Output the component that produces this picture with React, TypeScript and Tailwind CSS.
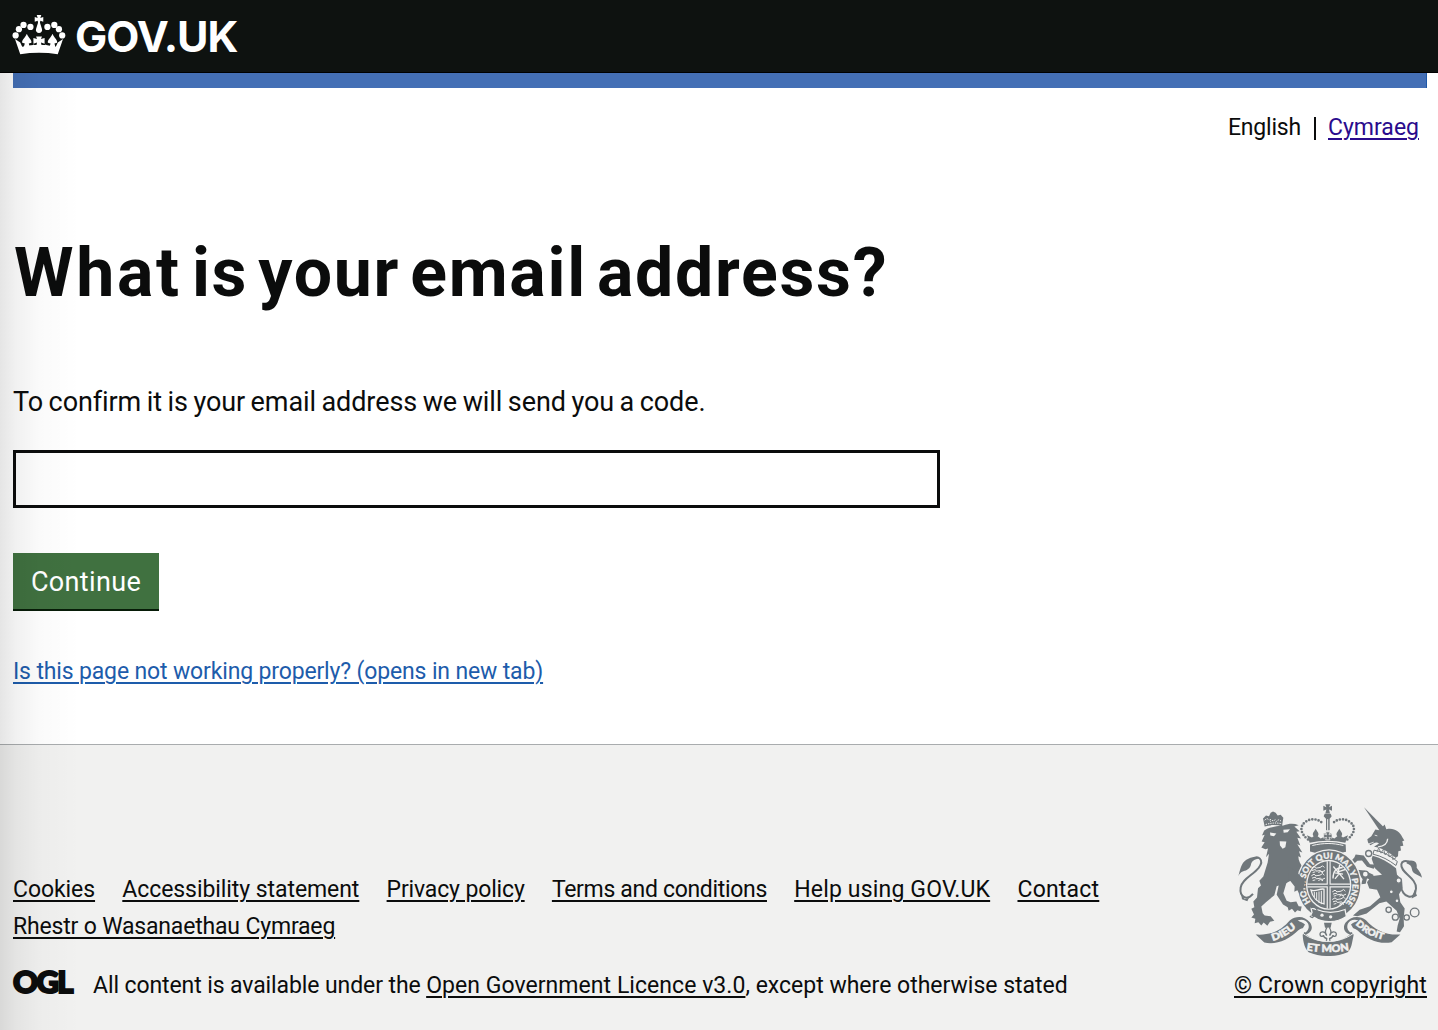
const PEARLS = [
  [47, 107],
  [57, 88],
  [71, 75],
  [92, 81],
];

function CrownLogo() {
  return (
    <svg viewBox="36 42 164 124" className="h-[41px] w-[54px]" fill="#fff" aria-hidden="true">
      {PEARLS.map(([x, y]) => (
        <g key={x}>
          <circle cx={x} cy={y} r="9.500" />
          <circle cx={235.5 - x} cy={y} r="9.500" />
        </g>
      ))}
      <path d="M111 45h14l-3 9 9-3v14l-9-3-1 6 6 19a9.500 9.500 0 1 1-18 0l6-19-1-6-9 3V51l9 3z" />
      <path d="M45 118l16 10 6 13q51-12 102 0l6-13 16-10-16 46q-57-9-114 0z" />
      <path d="M70 147l5-16-8-2c-2-8 9-14 14-27 5 13 16 19 14 27l-8 2 2 8q9 2 12-5l9 5h20l9-5q3 7 12 5l2-8-8-2c-2-8 9-14 14-27 5 13 16 19 14 27l-8 2 4 16z" />
      <path d="M109 110h18l-3 8 11-3v17l-11-4 3 16h-18l3-16-11 4v-17l11 3z" />
    </svg>
  );
}

const LOOPS = [
  [431, 175, 9],
  [421, 237, 9],
  [521, 256, 8],
  [499, 290, 6],
  [516, 317, 6],
  [491, 344, 8],
  [511, 366, 9],
  [545, 367, 8],
  [569, 352, 13],
];

function Quarter({ x, y }: { x: number; y: number }) {
  return (
    <g transform={`translate(${x} ${y})`} stroke="#f1f1f0" strokeWidth="3" fill="none">
      <path d="M2 8l8-5 6 5 12-2 8-5 5 5M4 15l10-3 3 5 12-2 5 4 9-4M6 21l8-2m9 2l7-3 7 4" />
      <path d="M2 31l8-5 6 5 12-2 8-5 5 5M4 38l10-3 3 5 12-2 5 4 9-4M6 45l8-2m9 2l7-3 7 4" />
    </g>
  );
}

function RoyalArms() {
  return (
    <svg viewBox="36 24 558 458" className="h-[153px] w-[186px]" fill="#70777b" aria-hidden="true">
      {/* central crown */}
      <path d="M301 27h15l-4 9 9-4v15l-9-4 3 12h-14l3-12-9 4V32l9 4z" />
      <path d="M299 56h18l3 7-6 8v34h-11V71l-7-8z" />
      <path d="M308 72v34" stroke="#f1f1f0" strokeWidth="3" />
      <g fill="none" stroke="#70777b" strokeWidth="8" strokeLinecap="round" strokeDasharray="0 9.500">
        <path d="M249 133c-24-19-26-40-7-53 14-12 42-10 53 8" />
        <path d="M367 133c24-19 26-40 7-53-14-12-42-10-53 8" />
      </g>
      <path d="M254 143l-8-23 15 7 5-4c-7-8 2-13 6-22 4 9 13 14 6 22l9 7 13-6-4-9h23l-4 9 13 6 9-7c-7-8 2-13 6-22 4 9 13 14 6 22l5 4 15-7-8 23c-34-8-73-8-107 0z" />
      <path d="M302 110h13l-3 9 9-3v13l-9-3 3 8h-13l3-8-9 3v-13l9 3z" stroke="#f1f1f0" strokeWidth="2" />
      <path d="M255 148c35-10 71-10 107 0l1 22-24 5c-20-6-40-6-60 0l-24-6z" />
      <path d="M262 151c33-8 62-8 93 0" fill="none" stroke="#f1f1f0" strokeWidth="3" />

      {/* lion */}
      <path d="M119 94l-5-24 9-9 9 2 5-10 7-4 8 4 6 8 9-2 8 9-4 25c-18-5-34-4-52 1z" />
      <path d="M119 75c8-8 14-3 18 5m31-2c-6-7-12-3-15 2m-18-8c5 6 13 6 17 0M122 88c17-5 32-6 49-2" fill="none" stroke="#f1f1f0" strokeWidth="3" strokeDasharray="4 3" />
      <path d="M118 106c12-10 37-13 57-15 17-6 31-7 46-1l-13 4 16 14-10 2 14 20-11-2 9 23-9-4 15 25-10-4 6 19-8-4c0 14 7 24 15 35l13 25-2 14 4 10-8-3 2 14-9-8-3 16-8-13-10 8 1-19-8-8c-9 2-18 7-23 10l-9 30 10 23 12 4 17-2 7 14 9 1-3 14-10-3-7 7-9-11-10 6-3-11-14-8-19-29 6-28-6 2-7 27-26 22-13 12 4 20 6 7 18 2 11 14-13 3-8 12-11-10-7 9-9-10-11 3 2-13-12-4 8-9-8-17 9-5-3-17 11-12 3-28 9-8-5-14 12-13 13-42 4-26-9 10 6-26-8 2-12-5 10-16-9-2 9-20-8 2 7-16z" />
      <path d="M135 112l19 3-7 8-11-2zM175 104l20-2-7 9-12 2zM164 138l20 1-3 17-8 5-8-10z" fill="#f1f1f0" />
      <path d="M84 296c-20 23-41 8-37-19 4-25 35-36 54-59 18-23-1-43-23-23" fill="none" stroke="#70777b" strokeWidth="6" />
      <path d="M40 243c6-19 8-39 24-49 13-9 28-12 40-5-16 3-24 8-26 19-3 12-12 18-23 20-8 2-12 8-15 15zM47 289l12 23 13-4-5 10-16-6z" />

      {/* unicorn */}
      <path d="M417 36l61 62-12 12z" />
      <path d="M463 105l16-17 5 14c22-6 41 7 48 24l6 10-6 2 3 14-9 1 2 13-8 2-1 15-7 5c-23-20-42-29-65-33l15-10c-9-8-18 2-26 5l-7-8-2-10 12-9 12-20z" />
      <path d="M459 155c14-1 28-7 29-24" stroke="#f1f1f0" strokeWidth="4" fill="none" />
      <path d="M449 120l8 2M432 146l14-5" stroke="#f1f1f0" strokeWidth="2.500" />
      <path d="M447 165c29 5 48 17 70 34l-4 12c-22-17-43-28-69-34z" fill="#f1f1f0" stroke="#70777b" strokeWidth="3" />
      <path d="M456 171l5-13 7 16 8-13 4 18 11-10 1 16 12-7-1 15 10-5" stroke="#70777b" strokeWidth="2.500" fill="none" />
      <path d="M443 182c25 6 47 19 70 37l3 20 15 14 2 26-11 18 4 24 13 19-3 28 1 25-12 18-10-2 3-18 6-20-9-24-31-28-21 5-38 31-28 8-13-2 20-17 31-11 31-27-10-22-23-4-7-19 13-18 32-4-21-20-10-28z" />
      <path d="M446 221l-20-6-15-19-14 1-13 12-10-7 14-15 4-9 24 3 19 26 19 2zM445 239l-27-13-22-2-12-8-3 13 20 7 12 16-5 15 14-1 4-16 21 5z" />
      <path d="M526 267c5 44 45 51 47 13 2-33-48-47-44-73 4-18 40-9 42 17" fill="none" stroke="#70777b" strokeWidth="6" />
      <path d="M545 198c23-7 33 4 30 20 6 9 13 14 16 30-9-9-25-10-29-21-2-12-4-18-17-22zM569 284l7 18-16 8z" />
      <g fill="#f1f1f0" stroke="#70777b" strokeWidth="4">
        {LOOPS.map(([x, y, r]) => (
          <circle key={`${x}-${y}`} cx={x} cy={y} r={r} />
        ))}
      </g>

      {/* garter and shield */}
      <ellipse cx="312" cy="269" rx="98" ry="107" fill="#f1f1f0" />
      <ellipse cx="312" cy="269" rx="94" ry="103" />
      <ellipse cx="311" cy="269" rx="68" ry="75" fill="#f1f1f0" />
      <ellipse cx="311" cy="269" rx="64" ry="71" />
      <path id="motto" d="M257 321A71 79 0 1 1 352 334" fill="none" />
      <text fill="#f1f1f0" stroke="#f1f1f0" strokeWidth="1" fontFamily="Lato, sans-serif" fontWeight="900" fontSize="25">
        <textPath href="#motto" textLength="350" lengthAdjust="spacingAndGlyphs">
          HONI SOIT QUI MAL Y PENSE
        </textPath>
      </text>
      <Quarter x={257} y={211} />
      <Quarter x={320} y={282} />
      <path d="M324 250c0-22 9-33 29-33M325 214l32 38m-13-43l-4 21 20-7M330 233l24 4m-24 14l14-17" stroke="#f1f1f0" strokeWidth="4" fill="none" />
      <path d="M258 285c15 6 25-6 39-3v44c-20-4-35-20-39-41z" fill="none" stroke="#f1f1f0" strokeWidth="4" />
      <path d="M268 290v16m7-15v25m7-27v34m7-36v40" stroke="#f1f1f0" strokeWidth="3" />
      <path d="M311 198v142M247 271h128" stroke="#f1f1f0" strokeWidth="12" />
      <path d="M311 198v142M247 271h128" stroke="#70777b" strokeWidth="5" />
      <path d="M258 338l17 5c28 12 52 13 85 0l4 21c-29 20-70 20-94 4l-14-6 5-10z" stroke="#f1f1f0" strokeWidth="4" />
      <g fill="#f1f1f0">
        <circle cx="291" cy="360" r="5" />
        <circle cx="317" cy="365" r="5" />
      </g>
      <path d="M256 338c12-5 21 0 20 9-1 6-8 9-10 15-2 8-8 5-11 0" fill="none" stroke="#70777b" strokeWidth="4" />
      <path d="M188 214l26 14 26 32-2 10 5 10-8-2 1 13-9-7-3 12-7-11-9 5 1-16-17-22z" />

      {/* fleur pendant */}
      <path d="M297 383h23l-3 15h-17z" />
      <path d="M309 392c-7 9-12 19-4 29-3-14-19-14-20-4 0 8 9 9 10 3 1 7 5 9 10 10l-1 11h11l-1-11c5-1 9-3 10-10 1 6 10 5 10-3-1-10-17-10-20 4 8-10 3-20-5-29z" fill="#f1f1f0" stroke="#70777b" strokeWidth="4" />

      {/* motto ribbon */}
      <path d="M92 418c52 4 81-18 103-43 19-15 45-13 60 7 13 19 0 32-12 36 38 30 96 29 132 0-14-5-25-18-13-36 15-20 42-22 61-7 26 29 60 46 103 43l-26 23c-36 8-74-8-102-35-10-7-18-8-26-7l14 20c-5 24-6 42-18 52-38 16-80 15-117 0-11-9-17-29-18-52l12-20c-8-2-17 0-25 6-28 28-66 45-102 37z" />
      <path d="M218 376c14-6 26 0 31 9 5 11 1 21-8 27l-12-5 11-19c-6-5-14-8-22-12zM400 376c-14-6-26 0-31 9-5 11-1 21 8 27l12-5-11-19c6-5 14-8 22-12z" fill="#f1f1f0" />
      <path d="M233 414c44 33 109 33 153 0" fill="none" stroke="#f1f1f0" strokeWidth="3" />
      <path id="dieu" d="M143 437c28-7 48-20 77-44" fill="none" />
      <path id="droit" d="M391 388c24 22 45 37 90 47" fill="none" />
      <path id="etmon" d="M244 465c40 8 86 8 132 0" fill="none" />
      <g fill="#f1f1f0" stroke="#f1f1f0" strokeWidth="1.500" fontFamily="Lato, sans-serif" fontWeight="900">
        <text fontSize="29">
          <textPath href="#dieu" textLength="82" lengthAdjust="spacingAndGlyphs">
            DIEU
          </textPath>
        </text>
        <text fontSize="28">
          <textPath href="#droit" textLength="96" lengthAdjust="spacingAndGlyphs">
            DROIT
          </textPath>
        </text>
        <text fontSize="31">
          <textPath href="#etmon" textLength="129" lengthAdjust="spacingAndGlyphs">
            ET MON
          </textPath>
        </text>
      </g>
    </svg>
  );
}

const FOOTER_LINKS = [
  { label: "Cookies", className: "w-[82px] tracking-[-0.07px]" },
  { label: "Accessibility statement", className: "w-[237px] tracking-[-0.07px]" },
  { label: "Privacy policy", className: "w-[138px] tracking-[-0.15px]" },
  { label: "Terms and conditions", className: "w-[215px] tracking-[-0.32px]" },
  { label: "Help using GOV.UK", className: "w-[196px] tracking-[0.17px]" },
  { label: "Contact", className: "w-[82px] tracking-[0.2px]" },
  { label: "Rhestr o Wasanaethau Cymraeg", className: "w-[322px] tracking-[-0.18px]" },
];

export default function App() {
  return (
    <div className="relative flex h-[1030px] w-full flex-col overflow-hidden bg-white font-['Roboto',sans-serif] text-[23px] leading-[30px] text-[#0b0c0c]">
      <header className="flex h-[73px] shrink-0 items-start border-b border-black bg-[#0e1210] pl-3 pt-3.5">
        <CrownLogo />
        <span className="-mt-[2.500px] ml-[9px] font-['Inter',sans-serif] text-[43px] font-bold leading-[48px] tracking-[-1px] text-white">
          GOV.UK
        </span>
      </header>
      <div className="ml-[13px] mr-[11px] h-[15px] shrink-0 border-r border-[#1d58a8] bg-[#446fb5]" />

      <nav className="mr-[19px] mt-[25px] flex h-[30px] shrink-0 items-center justify-end whitespace-nowrap">
        <span className="tracking-[-0.2px]">English</span>
        <span className="ml-[13px] mr-3 h-[23px] w-0.5 bg-[#0b0c0c]" />
        <a className="text-[#2a0b8d] underline decoration-[1.5px] underline-offset-[3px]">Cymraeg</a>
      </nav>

      <main className="flex h-[601px] shrink-0 flex-col items-start whitespace-nowrap pl-[13px]">
        <h1 className="ml-px mt-[90px] text-[68px] font-bold leading-[80px] tracking-[1.7px] [word-spacing:-8.500px]">
          <span className="tracking-[2.700px]">What</span> is your email address?
        </h1>
        <p className="mt-[71px] text-[27px] leading-[36px] tracking-[-0.1px] [word-spacing:-1px]">
          To confirm it is your email address we will send you a code.
        </p>
        <input
          type="text"
          aria-label="Email address"
          className="mt-[30px] h-[58px] w-[927px] border-[3px] border-[#0b0c0c] bg-transparent outline-none"
        />
        <button className="mt-[45px] h-[58px] w-[146px] border-b-2 border-[#071c08] bg-[#407140] pt-0.5 text-[27px] leading-[36px] tracking-[0.35px] text-white">
          Continue
        </button>
        <a className="mt-[46px] tracking-[-0.15px] text-[#1d5cab] underline decoration-[1.5px] underline-offset-[3px]">
          Is this page not working properly? (opens in new tab)
        </a>
      </main>

      <footer className="flex flex-1 border-t border-[#a9acae] bg-[#f1f1f0] pl-[13px] pr-[11px]">
        <div className="flex flex-1 flex-col">
          <nav className="mt-[130px] flex w-[1110px] flex-wrap gap-x-[27.300px] gap-y-[7px] whitespace-nowrap">
            {FOOTER_LINKS.map((link) => (
              <a
                key={link.label}
                className={`underline decoration-[1.5px] underline-offset-[3px] ${link.className}`}
              >
                {link.label}
              </a>
            ))}
          </nav>
          <div className="mt-[29px] flex h-[30px] items-center whitespace-nowrap">
            <span className="-mt-[11px] w-20 font-['Lato',sans-serif] text-[31px] font-black leading-[30px] tracking-[-1.700px] [-webkit-text-stroke:2px_#0b0c0c]">
              OGL
            </span>
            <p>
              <span className="tracking-[-0.1px]">All content is available under the </span>
              <a className="tracking-[0.05px] underline decoration-[1.5px] underline-offset-[3px]">
                Open Government Licence v3.0
              </a>
              , except where otherwise stated
            </p>
          </div>
        </div>
        <div className="flex w-[193px] flex-col whitespace-nowrap pt-[58px]">
          <div className="ml-[3px]">
            <RoyalArms />
          </div>
          <a className="mt-[15px] tracking-[0.15px] underline decoration-[1.5px] underline-offset-[3px]">
            © Crown copyright
          </a>
        </div>
      </footer>

      <div className="pointer-events-none absolute bottom-0 left-0 top-[73px] w-20 bg-[linear-gradient(to_right,rgba(0,0,0,0.1),rgba(0,0,0,0.055)_20%,rgba(0,0,0,0.02)_50%,transparent)]" />
    </div>
  );
}
